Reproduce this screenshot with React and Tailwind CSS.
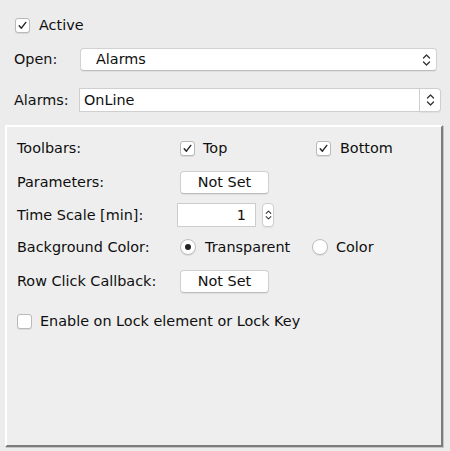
import React from "react";

function Check({ checked }) {
  return (
    <div className="w-[15px] h-[15px] rounded-[3px] bg-white border border-[#b9b9b9] shadow-[0_1px_0_rgba(0,0,0,0.08)] flex items-center justify-center shrink-0">
      {checked && (
        <svg width="11" height="11" viewBox="0 0 11 11">
          <path d="M2.2 5.8 L4.4 8.2 L8.8 2.4" fill="none" stroke="#222" strokeWidth="1.4" strokeLinecap="round" strokeLinejoin="round" />
        </svg>
      )}
    </div>
  );
}

function Radio({ checked }) {
  return (
    <div className="w-[16px] h-[16px] rounded-full bg-white border border-[#bdbdbd] shadow-[0_1px_0_rgba(0,0,0,0.08)] flex items-center justify-center shrink-0">
      {checked && <div className="w-[6px] h-[6px] rounded-full bg-[#222]" />}
    </div>
  );
}

function Chevrons({ w = 9, h = 14 }) {
  return (
    <svg width={w} height={h} viewBox="0 0 9 14">
      <path d="M1.5 5 L4.5 2 L7.5 5" fill="none" stroke="#333" strokeWidth="1.3" strokeLinecap="round" strokeLinejoin="round" />
      <path d="M1.5 9 L4.5 12 L7.5 9" fill="none" stroke="#333" strokeWidth="1.3" strokeLinecap="round" strokeLinejoin="round" />
    </svg>
  );
}

function Button({ children }) {
  return (
    <div className="w-[89px] h-[23px] bg-white rounded-[4px] border border-[#d0d0d0] border-b-[#bcbcbc] shadow-[0_1px_1px_rgba(0,0,0,0.06)] flex items-center justify-center">
      {children}
    </div>
  );
}

export default function App() {
  return (
    <div className="w-[450px] h-[451px] bg-[#ececec] text-[#0f0f0f] text-[14.4px] leading-none font-['DejaVu_Sans',sans-serif] overflow-hidden">
      <div className="flex items-center pl-[15px] pt-[18px] h-[32px]">
        <Check checked />
        <span className="ml-[9px]">Active</span>
      </div>

      <div className="flex items-center pl-[14px] mt-[16px] h-[23px]">
        <span className="w-[66px]">Open:</span>
        <div className="w-[357px] h-[23px] bg-white rounded-[4px] border border-[#d2d2d2] border-b-[#bdbdbd] shadow-[0_1px_1px_rgba(0,0,0,0.06)] flex items-center pl-[15px] pr-[5px]">
          <span className="flex-1">Alarms</span>
          <Chevrons />
        </div>
      </div>

      <div className="flex items-center pl-[14px] mt-[17px] h-[24px]">
        <span className="w-[65px]">Alarms:</span>
        <div className="w-[341px] h-[24px] bg-white border border-[#cfcfcf] flex items-center pl-[4px]">
          OnLine
        </div>
        <div className="w-[21px] h-[24px] bg-white rounded-r-[4px] border border-l-0 border-[#cfcfcf] shadow-[0_1px_1px_rgba(0,0,0,0.06)] flex items-center justify-center">
          <Chevrons />
        </div>
      </div>

      <div className="ml-[5px] mt-[13px] w-[438px] h-[322px] bg-[#eeeeee] border-l-2 border-t-2 border-l-white border-t-white border-r-2 border-b-2 border-r-[#7c7c7c] border-b-[#7c7c7c] shadow-[1px_1px_0_#c4c4c4] pl-[10px] pt-[9px]">
        <div className="flex items-center h-[24px]">
          <span className="w-[163px]">Toolbars:</span>
          <Check checked />
          <span className="ml-[8px] w-[113px]">Top</span>
          <Check checked />
          <span className="ml-[9px]">Bottom</span>
        </div>

        <div className="flex items-center h-[24px] mt-[10px]">
          <span className="w-[163px]">Parameters:</span>
          <Button>Not Set</Button>
        </div>

        <div className="flex items-center h-[24px] mt-[9px]">
          <span className="w-[160px]">Time Scale [min]:</span>
          <div className="w-[79px] h-[24px] bg-white border border-[#cdcdcd] flex items-center justify-end pr-[9px]">1</div>
          <div className="ml-[6px] w-[12px] h-[24px] bg-white rounded-[4px] border border-[#cfcfcf] shadow-[0_1px_1px_rgba(0,0,0,0.06)] flex items-center justify-center">
            <Chevrons w={7} h={14} />
          </div>
        </div>

        <div className="flex items-center h-[24px] mt-[8px]">
          <span className="w-[163px]">Background Color:</span>
          <Radio checked />
          <span className="ml-[9px] w-[107px]">Transparent</span>
          <Radio />
          <span className="ml-[8px]">Color</span>
        </div>

        <div className="flex items-center h-[24px] mt-[10px]">
          <span className="w-[163px]">Row Click Callback:</span>
          <Button>Not Set</Button>
        </div>

        <div className="flex items-center h-[24px] mt-[16px]">
          <Check />
          <span className="ml-[8px]">Enable on Lock element or Lock Key</span>
        </div>
      </div>
    </div>
  );
}
